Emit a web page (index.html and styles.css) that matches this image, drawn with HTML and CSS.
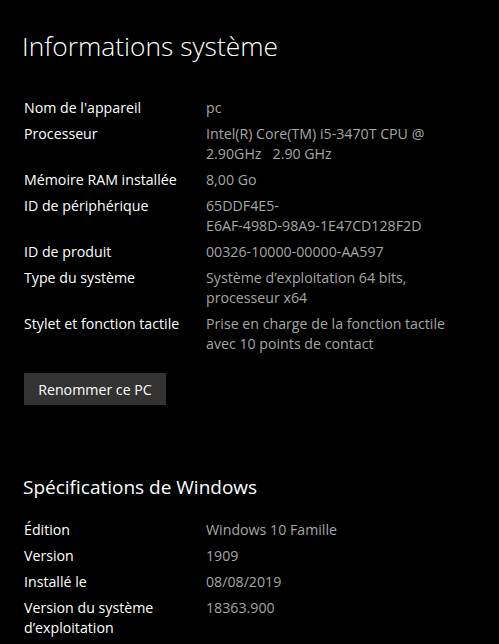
FILE: index.html
```html
<!DOCTYPE html>
<html lang="fr">
<head>
    <meta charset="UTF-8">
    <meta name="viewport" content="width=device-width, initial-scale=1.0">
    <title>Informations système</title>
    <link rel="stylesheet" href="styles.css">
</head>
<body>
    <div class="page">
        <h1 class="title">Informations système</h1>

        <div class="specs">
            <div class="label">Nom de l'appareil</div>
            <div class="value">pc</div>

            <div class="label">Processeur</div>
            <div class="value">Intel(R) Core(TM) i5-3470T CPU @<br>2.90GHz&nbsp;&nbsp;&nbsp;2.90 GHz</div>

            <div class="label">Mémoire RAM installée</div>
            <div class="value">8,00 Go</div>

            <div class="label">ID de périphérique</div>
            <div class="value">65DDF4E5-<br>E6AF-498D-98A9-1E47CD128F2D</div>

            <div class="label">ID de produit</div>
            <div class="value">00326-10000-00000-AA597</div>

            <div class="label">Type du système</div>
            <div class="value">Système d’exploitation 64 bits,<br>processeur x64</div>

            <div class="label">Stylet et fonction tactile</div>
            <div class="value">Prise en charge de la fonction tactile<br>avec 10 points de contact</div>
        </div>

        <button class="rename">Renommer ce PC</button>

        <h2 class="subtitle">Spécifications de Windows</h2>

        <div class="specs">
            <div class="label">Édition</div>
            <div class="value">Windows 10 Famille</div>

            <div class="label">Version</div>
            <div class="value">1909</div>

            <div class="label">Installé le</div>
            <div class="value">08/08/2019</div>

            <div class="label">Version du système<br>d’exploitation</div>
            <div class="value">18363.900</div>
        </div>
    </div>
</body>
</html>
```

FILE: styles.css
```css
/* General */
body {
    margin: 0;
    background: #000;
    color: #fff;
    font-family: "Open Sans", "Noto Sans", sans-serif;
    font-size: 14.2px;
}

.page {
    padding: 26px 24px 0 24px;
}

/* Headings */
.title {
    margin: 0 0 0 -2px;
    font-size: 26.4px;
    font-weight: 300;
    line-height: 40px;
}

.subtitle {
    margin: 0 0 0 -1px;
    font-size: 19px;
    font-weight: 400;
    line-height: 28px;
}

/* Spec rows */
.specs {
    display: grid;
    grid-template-columns: 182px 1fr;
    row-gap: 6px;
    line-height: 20px;
}

.specs:first-of-type {
    margin-top: 32px;
}

.label {
    color: #fff;
}

.value {
    color: #a6a6a6;
}

/* Button */
.rename {
    display: block;
    margin: 19px 0 68px 0;
    width: 142px;
    height: 32px;
    padding: 0;
    border: none;
    background: #333;
    color: #fff;
    font-family: inherit;
    font-size: 14.2px;
}

.subtitle + .specs {
    margin-top: 19px;
}
```
